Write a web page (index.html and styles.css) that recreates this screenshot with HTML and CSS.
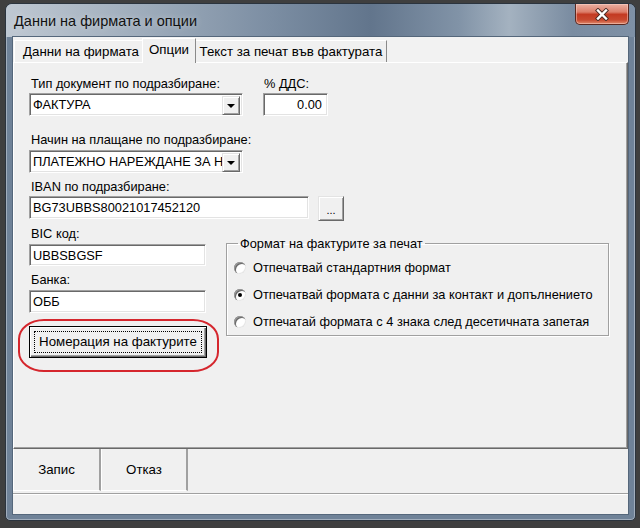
FILE: index.html
```html
<!DOCTYPE html>
<html>
<head>
<meta charset="utf-8">
<title>Данни на фирмата и опции</title>
<link rel="stylesheet" href="styles.css">
</head>
<body>
<div class="window">
  <div class="titlebar">
    <span class="title">Данни на фирмата и опции</span>
    <div class="close">
      <svg width="16" height="13" viewBox="0 0 16 13">
        <path d="M4 2.5 L12 10.5 M12 2.5 L4 10.5" stroke="#4a2a24" stroke-width="4.2" stroke-linecap="square"/>
        <path d="M4 2.5 L12 10.5 M12 2.5 L4 10.5" stroke="#ffffff" stroke-width="2.4" stroke-linecap="square"/>
      </svg>
    </div>
  </div>
  <div class="client">
    <div class="tabs">
      <div class="tab t1">Данни на фирмата</div>
      <div class="tab t2 active">Опции</div>
      <div class="tab t3">Текст за печат във фактурата</div>
    </div>
    <div class="page">
      <div class="row">
        <div class="col">
          <div class="label">Тип документ по подразбиране:</div>
          <div class="combo c1">
            <span class="val">ФАКТУРА</span>
            <span class="drop"><i class="tri"></i></span>
          </div>
        </div>
        <div class="col vat">
          <div class="label">% ДДС:</div>
          <div class="edit e-vat">0.00</div>
        </div>
      </div>
      <div class="label l2">Начин на плащане по подразбиране:</div>
      <div class="combo c2">
        <span class="val">ПЛАТЕЖНО НАРЕЖДАНЕ ЗА Н</span>
        <span class="drop"><i class="tri"></i></span>
      </div>
      <div class="label l3">IBAN по подразбиране:</div>
      <div class="row iban-row">
        <div class="edit e-iban">BG73UBBS80021017452120</div>
        <div class="btn dots">...</div>
      </div>
      <div class="row lower">
        <div class="col leftcol">
          <div class="label">BIC код:</div>
          <div class="edit e-short e-bic">UBBSBGSF</div>
          <div class="label l5">Банка:</div>
          <div class="edit e-short e-bank">ОББ</div>
          <div class="btn defbtn"><span class="focus">Номерация на фактурите</span></div>
        </div>
        <fieldset class="group">
          <legend>Формат на фактурите за печат</legend>
          <div class="opt"><span class="radio"></span>Отпечатвай стандартния формат</div>
          <div class="opt"><span class="radio on"></span>Отпечатвай формата с данни за контакт и допълнението</div>
          <div class="opt"><span class="radio"></span>Отпечатай формата с 4 знака след десетичната запетая</div>
        </fieldset>
      </div>
    </div>
    <div class="actions">
      <div class="act">Запис</div>
      <div class="act">Отказ</div>
    </div>
    <div class="sep"></div>
    <div class="status"></div>
  </div>
  <div class="highlight"></div>
</div>
</body>
</html>
```
FILE: styles.css
```css
html, body {
  margin: 0;
  padding: 0;
}
body {
  width: 640px;
  height: 528px;
  overflow: hidden;
  background: #3f3f3f;
  font-family: "Liberation Sans", Arial, sans-serif;
  font-size: 12.8px;
  font-weight: normal;
  color: #000;
}
.window {
  position: relative;
  margin: 3px 0 0 5px;
  width: 631px;
  height: 518px;
  box-sizing: border-box;
  border: 1px solid #2b343e;
  border-radius: 7px 7px 5px 5px;
  background: #6f8298;
  box-shadow: inset 0 0 0 1px rgba(255,255,255,0.35);
}
.titlebar {
  height: 33px;
  display: flex;
  align-items: flex-start;
  border-radius: 6px 6px 0 0;
  background: linear-gradient(90deg, #bfc8d2 0%, #9eacbb 22%, #7c8ea3 42%, #62758c 58%, #8193a7 72%, #a4b2c0 80%, #7a8ca1 90%, #7e90a5 100%);
}
.title {
  margin: 8px 0 0 8px;
  font-family: "Liberation Sans", Arial, sans-serif;
  font-size: 14.5px;
  line-height: 18px;
  color: #111;
  text-shadow: 0 0 6px rgba(255,255,255,0.45);
}
.close {
  margin-left: auto;
  margin-right: 6px;
  width: 54px;
  height: 21px;
  box-sizing: border-box;
  border: 1px solid #5a2820;
  border-top: none;
  border-radius: 0 0 5px 5px;
  background: linear-gradient(#eab0a2 0%, #dc7e6a 40%, #c33a22 52%, #c84a30 80%, #e08a6c 100%);
  display: flex;
  align-items: center;
  justify-content: center;
  box-shadow: inset 0 0 0 1px rgba(255,220,210,0.45);
}
.close svg { display: block; }
.client {
  margin: 0 7px;
  width: 615px;
  height: 477px;
  background: #f0f0f0;
  display: flex;
  flex-direction: column;
  box-shadow: 0 0 0 1px #55677b;
}
.tabs {
  height: 25px;
  display: flex;
  align-items: flex-end;
  padding-left: 1px;
  background: #f2f2f2;
}
.tab {
  height: 22px;
  box-sizing: border-box;
  border-top: 1px solid #fff;
  border-left: 1px solid #fff;
  border-right: 1px solid #8a8a8a;
  line-height: 21px;
  text-align: center;
  font-size: 13.3px;
  background: #f0f0f0;
}
.t1 { width: 130px; padding-left: 4px; }
.t2 {
  width: 54px;
  height: 25px;
  margin: 0 -1px -1px -2px;
  line-height: 22px;
  position: relative;
  z-index: 1;
  background: #f0f0f0;
}
.t3 { width: 192px; }
.page {
  height: 387px;
  box-sizing: border-box;
  border-top: 1px solid #fff;
  border-left: 1px solid #fff;
  border-right: 1px solid #696969;
  border-bottom: 1px solid #696969;
  box-shadow: inset -1px -1px 0 #a0a0a0;
  padding: 12px 0 0 15px;
}
.row { display: flex; }
.col { display: flex; flex-direction: column; }
.label {
  height: 17px;
  line-height: 17px;
  padding-left: 2px;
  white-space: nowrap;
}
.vat { margin-left: 20px; }
.vat .label { padding-left: 1px; }
.edit, .combo {
  box-sizing: border-box;
  height: 23px;
  background: #fff;
  border: 1px solid;
  border-color: #a0a0a0 #fff #fff #a0a0a0;
  box-shadow: inset 1px 1px 0 #696969, inset -1px -1px 0 #e3e3e3;
  line-height: 21px;
  padding-left: 3px;
  white-space: nowrap;
  overflow: hidden;
}
.combo {
  display: flex;
  width: 214px;
  margin-top: 1px;
  padding: 2px 2px 2px 3px;
  line-height: 17px;
}
.combo .val {
  flex: 1;
  overflow: hidden;
  white-space: nowrap;
}
.drop {
  width: 18px;
  height: 19px;
  flex: none;
  box-sizing: border-box;
  background: #f0f0f0;
  border: 1px solid;
  border-color: #e3e3e3 #696969 #696969 #e3e3e3;
  box-shadow: inset 1px 1px 0 #fff, inset -1px -1px 0 #a0a0a0;
  display: flex;
  align-items: center;
  justify-content: center;
}
.tri {
  width: 0;
  height: 0;
  border-left: 4px solid transparent;
  border-right: 4px solid transparent;
  border-top: 4px solid #000;
  margin-top: 1px;
}
.e-vat {
  width: 65px;
  margin-top: 1px;
  text-align: right;
  padding-right: 5px;
}
.l2 { margin-top: 15px; }
.c2 { margin-top: 2px; height: 23px; }
.l3 { margin-top: 5px; }
.iban-row { margin-top: 1px; align-items: flex-start; }
.e-iban { width: 280px; }
.btn {
  box-sizing: border-box;
  background: #f0f0f0;
  border: 1px solid;
  border-color: #e3e3e3 #696969 #696969 #e3e3e3;
  box-shadow: inset 1px 1px 0 #fff, inset -1px -1px 0 #a0a0a0;
  text-align: center;
}
.dots {
  width: 26px;
  height: 25px;
  margin-left: 9px;
  line-height: 26px;
  font-size: 11px;
}
.lower { margin-top: 4px; align-items: flex-start; }
.leftcol { width: 177px; }
.e-short { width: 177px; margin-top: 2px; }
.e-bic { height: 22px; }
.l5 { margin-top: 5px; }
.defbtn {
  width: 178px;
  height: 32px;
  margin-top: 13px;
  border: 1px solid #000;
  box-shadow: inset 1px 1px 0 #fff, inset -1px -1px 0 #696969, inset -2px -2px 0 #a0a0a0;
  padding: 4px;
  display: flex;
}
.focus {
  flex: 1;
  border: 1px dotted #000;
  line-height: 20px;
  text-align: center;
  font-size: 13.3px;
}
.group {
  margin: 10px 0 0 20px;
  width: 383px;
  height: 101px;
  box-sizing: border-box;
  border: 1px solid #a0a0a0;
  box-shadow: 1px 1px 0 #fff, inset 1px 1px 0 #fff;
  padding: 2px 0 0 7px;
}
.group legend {
  padding: 0 2px;
  margin-left: 4px;
  line-height: 17px;
  height: 17px;
  font-weight: normal;
}
.opt {
  height: 27px;
  display: flex;
  align-items: center;
  white-space: nowrap;
}
.radio {
  width: 12px;
  height: 12px;
  flex: none;
  border-radius: 50%;
  background: #fff;
  box-shadow: inset 1px 1px 0 #9a9a9a, inset 2px 2px 0 #6a6a6a, inset -1px -1px 0 #e6e6e6;
  margin-right: 7px;
  display: flex;
  align-items: center;
  justify-content: center;
}
.radio.on::after {
  content: "";
  width: 4px;
  height: 4px;
  border-radius: 50%;
  background: #000;
}
.actions {
  height: 42px;
  display: flex;
}
.act {
  width: 88px;
  box-sizing: border-box;
  border-left: 1px solid #fff;
  border-right: 2px solid #a0a0a0;
  border-bottom: 1px solid #fff;
  display: flex;
  align-items: center;
  justify-content: center;
  font-size: 13.3px;
}
.act + .act { width: 87px; }
.sep {
  height: 2px;
  margin-top: 2px;
  border-top: 1px solid #a0a0a0;
  border-bottom: 1px solid #fff;
  box-sizing: border-box;
}
.status {
  flex: 1;
}
.highlight {
  position: absolute;
  left: 12px;
  top: 315px;
  width: 201px;
  height: 53px;
  box-sizing: border-box;
  border: 2px solid #d5262d;
  border-radius: 26px / 20px;
  pointer-events: none;
}
```
